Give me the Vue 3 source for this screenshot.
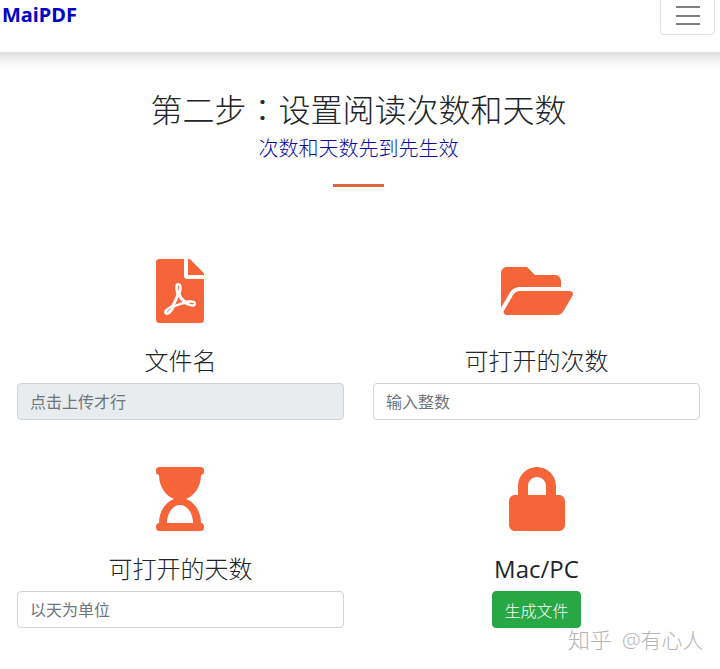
<template>
  <div class="page">
    <nav class="navbar">
      <a class="brand" href="#">MaiPDF</a>
      <button class="toggler" type="button" aria-label="menu">
        <span></span>
        <span></span>
        <span></span>
      </button>
    </nav>

    <section class="heading">
      <h2>第二步<span class="colon">：</span>设置阅读次数和天数</h2>
      <p>次数和天数先到先生效</p>
      <div class="divider"></div>
    </section>

    <section class="form-grid">
      <div class="cell">
        <svg class="icon" viewBox="0 0 384 512" width="48" height="64">
          <path d="M181.9 256.1c-5-16-4.9-46.9-2-46.9 8.4 0 7.6 36.9 2 46.9zm-1.7 47.2c-7.7 20.2-17.3 43.3-28.4 62.7 18.3-7 39-17.2 62.9-21.9-12.7-9.6-24.9-23.4-34.5-40.8zM86.1 428.1c0 .8 13.2-5.4 34.9-40.2-6.7 6.3-29.1 24.5-34.9 40.2zM248 160h136v328c0 13.3-10.7 24-24 24H24c-13.3 0-24-10.7-24-24V24C0 10.7 10.7 0 24 0h200v136c0 13.2 10.8 24 24 24zm-8 171.8c-20-12.2-33.3-29-42.7-53.8 4.5-18.5 11.6-46.6 6.2-64.2-4.7-29.4-42.4-26.5-47.8-6.8-5 18.3-.4 44.1 8.1 77-11.6 27.6-28.7 64.6-40.8 85.8-.1 0-.1.1-.2.1-27.1 13.9-73.6 44.5-54.5 68 5.6 6.9 16 10 21.5 10 17.9 0 35.7-18 61.1-61.8 25.8-8.5 54.1-19.1 79-23.2 21.7 11.8 47.1 19.5 64 19.5 29.2 0 31.2-32 19.7-43.4-13.9-13.6-54.3-9.7-73.6-7.2zM377 105L279 7c-4.5-4.5-10.6-7-17-7h-6v128h128v-6.1c0-6.3-2.5-12.4-7-16.9zm-74.1 255.3c4.1-2.7-2.5-11.9-42.8-9 37.1 15.8 42.8 9 42.8 9z" />
        </svg>
        <h4>文件名</h4>
        <input class="field" type="text" placeholder="点击上传才行" disabled />
      </div>

      <div class="cell">
        <svg class="icon" viewBox="0 0 576 512" width="72" height="64">
          <path d="M572.694 292.093L500.27 416.248A63.997 63.997 0 0 1 444.989 448H45.025c-18.523 0-30.064-20.093-20.731-36.093l72.424-124.155A64 64 0 0 1 152 256h399.964c18.523 0 30.064 20.093 20.73 36.093zM152 224h328v-48c0-26.51-21.49-48-48-48H272l-64-64H48C21.49 64 0 85.49 0 112v278.046l69.077-118.418C86.214 242.25 117.989 224 152 224z" />
        </svg>
        <h4>可打开的次数</h4>
        <input class="field" type="text" placeholder="输入整数" />
      </div>

      <div class="cell">
        <svg class="icon" viewBox="0 0 384 512" width="48" height="64">
          <path d="M360 0H24C10.745 0 0 10.745 0 24v16c0 13.255 10.745 24 24 24 0 90.965 51.016 167.734 120.842 192C75.016 280.266 24 357.035 24 448c-13.255 0-24 10.745-24 24v16c0 13.255 10.745 24 24 24h336c13.255 0 24-10.745 24-24v-16c0-13.255-10.745-24-24-24 0-90.965-51.016-167.734-120.842-192C308.984 231.734 360 154.965 360 64c13.255 0 24-10.745 24-24V24c0-13.255-10.745-24-24-24zm-64 448H88c0-77.458 46.204-144 104-144 57.786 0 104 66.517 104 144z" />
        </svg>
        <h4>可打开的天数</h4>
        <input class="field" type="text" placeholder="以天为单位" />
      </div>

      <div class="cell">
        <svg class="icon" viewBox="0 0 448 512" width="56" height="64">
          <path d="M400 224h-24v-72C376 68.2 307.8 0 224 0S72 68.2 72 152v72H48c-26.5 0-48 21.5-48 48v192c0 26.5 21.5 48 48 48h352c26.5 0 48-21.5 48-48V272c0-26.5-21.5-48-48-48zm-104 0H152v-72c0-39.7 32.3-72 72-72s72 32.3 72 72v72z" />
        </svg>
        <h4 class="latin">Mac/PC</h4>
        <button class="btn-generate" type="button">生成文件</button>
      </div>
    </section>

    <div class="watermark"><b>知乎</b>@有心人</div>
  </div>
</template>

<script setup>
</script>

<style>
body {
  background: #fff;
}
</style>

<style scoped>
.page {
  position: relative;
  width: 720px;
  height: 669px;
  overflow: hidden;
  background: #fff;
  color: #212529;
  font-family: "Open Sans", "Noto Sans CJK SC", sans-serif;
}

/* wider than the page so the shadow doesn't fade at the corners */
.navbar {
  display: flex;
  justify-content: space-between;
  align-items: flex-start;
  height: 52px;
  margin: 0 -30px;
  padding: 0 35px 0 32px;
  box-sizing: border-box;
  background: #fff;
  box-shadow: 0 5px 14px rgba(0, 0, 0, 0.17);
}

.brand {
  margin-top: 2px;
  font-family: "Noto Sans", sans-serif;
  font-size: 20px;
  line-height: 26px;
  font-weight: 700;
  color: #0000c8;
  text-decoration: none;
}

.toggler {
  display: flex;
  flex-direction: column;
  justify-content: flex-end;
  gap: 6.5px;
  align-items: center;
  width: 55px;
  height: 40px;
  margin-top: -5px;
  padding: 0 0 9px;
  background: #fff;
  border: 1px solid #e3e3e3;
  border-radius: 4px;
}

.toggler span {
  display: block;
  width: 24px;
  height: 2px;
  background: #808080;
}

.heading {
  padding-top: 37px;
  margin-right: 3px;
  text-align: center;
}

.heading h2 {
  margin: 0;
  font-size: 32px;
  line-height: 38px;
  font-weight: 300;
}

.colon {
  font-family: "Noto Sans CJK TC", sans-serif;
}

.heading p {
  margin: 5px 0 0;
  font-size: 20px;
  line-height: 30px;
  font-weight: 300;
  color: #0808a8;
}

.divider {
  width: 51px;
  height: 3px;
  margin: 20px auto 0;
  background: #e0663f;
}

.form-grid {
  display: grid;
  grid-template-columns: 327px 327px;
  column-gap: 29px;
  row-gap: 47px;
  padding: 72px 20px 0 17px;
}

.cell {
  display: flex;
  flex-direction: column;
  align-items: center;
}

.icon {
  display: block;
  fill: #f6653a;
}

.cell:nth-child(odd) .icon {
  margin-right: 1px;
}

.cell h4 {
  margin: 20px 0 4px;
  font-size: 24px;
  line-height: 36px;
  font-weight: 300;
  white-space: nowrap;
}

.cell h4.latin {
  font-weight: 400;
}

.field {
  width: 100%;
  height: 37px;
  box-sizing: border-box;
  padding: 0 12px;
  font-family: inherit;
  font-size: 16px;
  color: #495057;
  background: #fff;
  border: 1px solid #ced4da;
  border-radius: 4px;
  outline: none;
}

.field::placeholder {
  color: #6c757d;
  opacity: 1;
}

.field:disabled {
  background: #e9ecef;
}

.btn-generate {
  width: 89px;
  height: 37px;
  padding: 0;
  font-family: inherit;
  font-size: 16px;
  font-weight: 300;
  color: #fff;
  background: #28a745;
  border: 1px solid #28a745;
  border-radius: 4px;
}

.watermark {
  position: absolute;
  left: 568px;
  top: 625px;
  font-size: 21px;
  line-height: 28px;
  font-weight: 300;
  color: #b4b4b4;
  white-space: nowrap;
}

.watermark b {
  margin-right: 10px;
  font-size: 22px;
  font-weight: 300;
}
</style>
